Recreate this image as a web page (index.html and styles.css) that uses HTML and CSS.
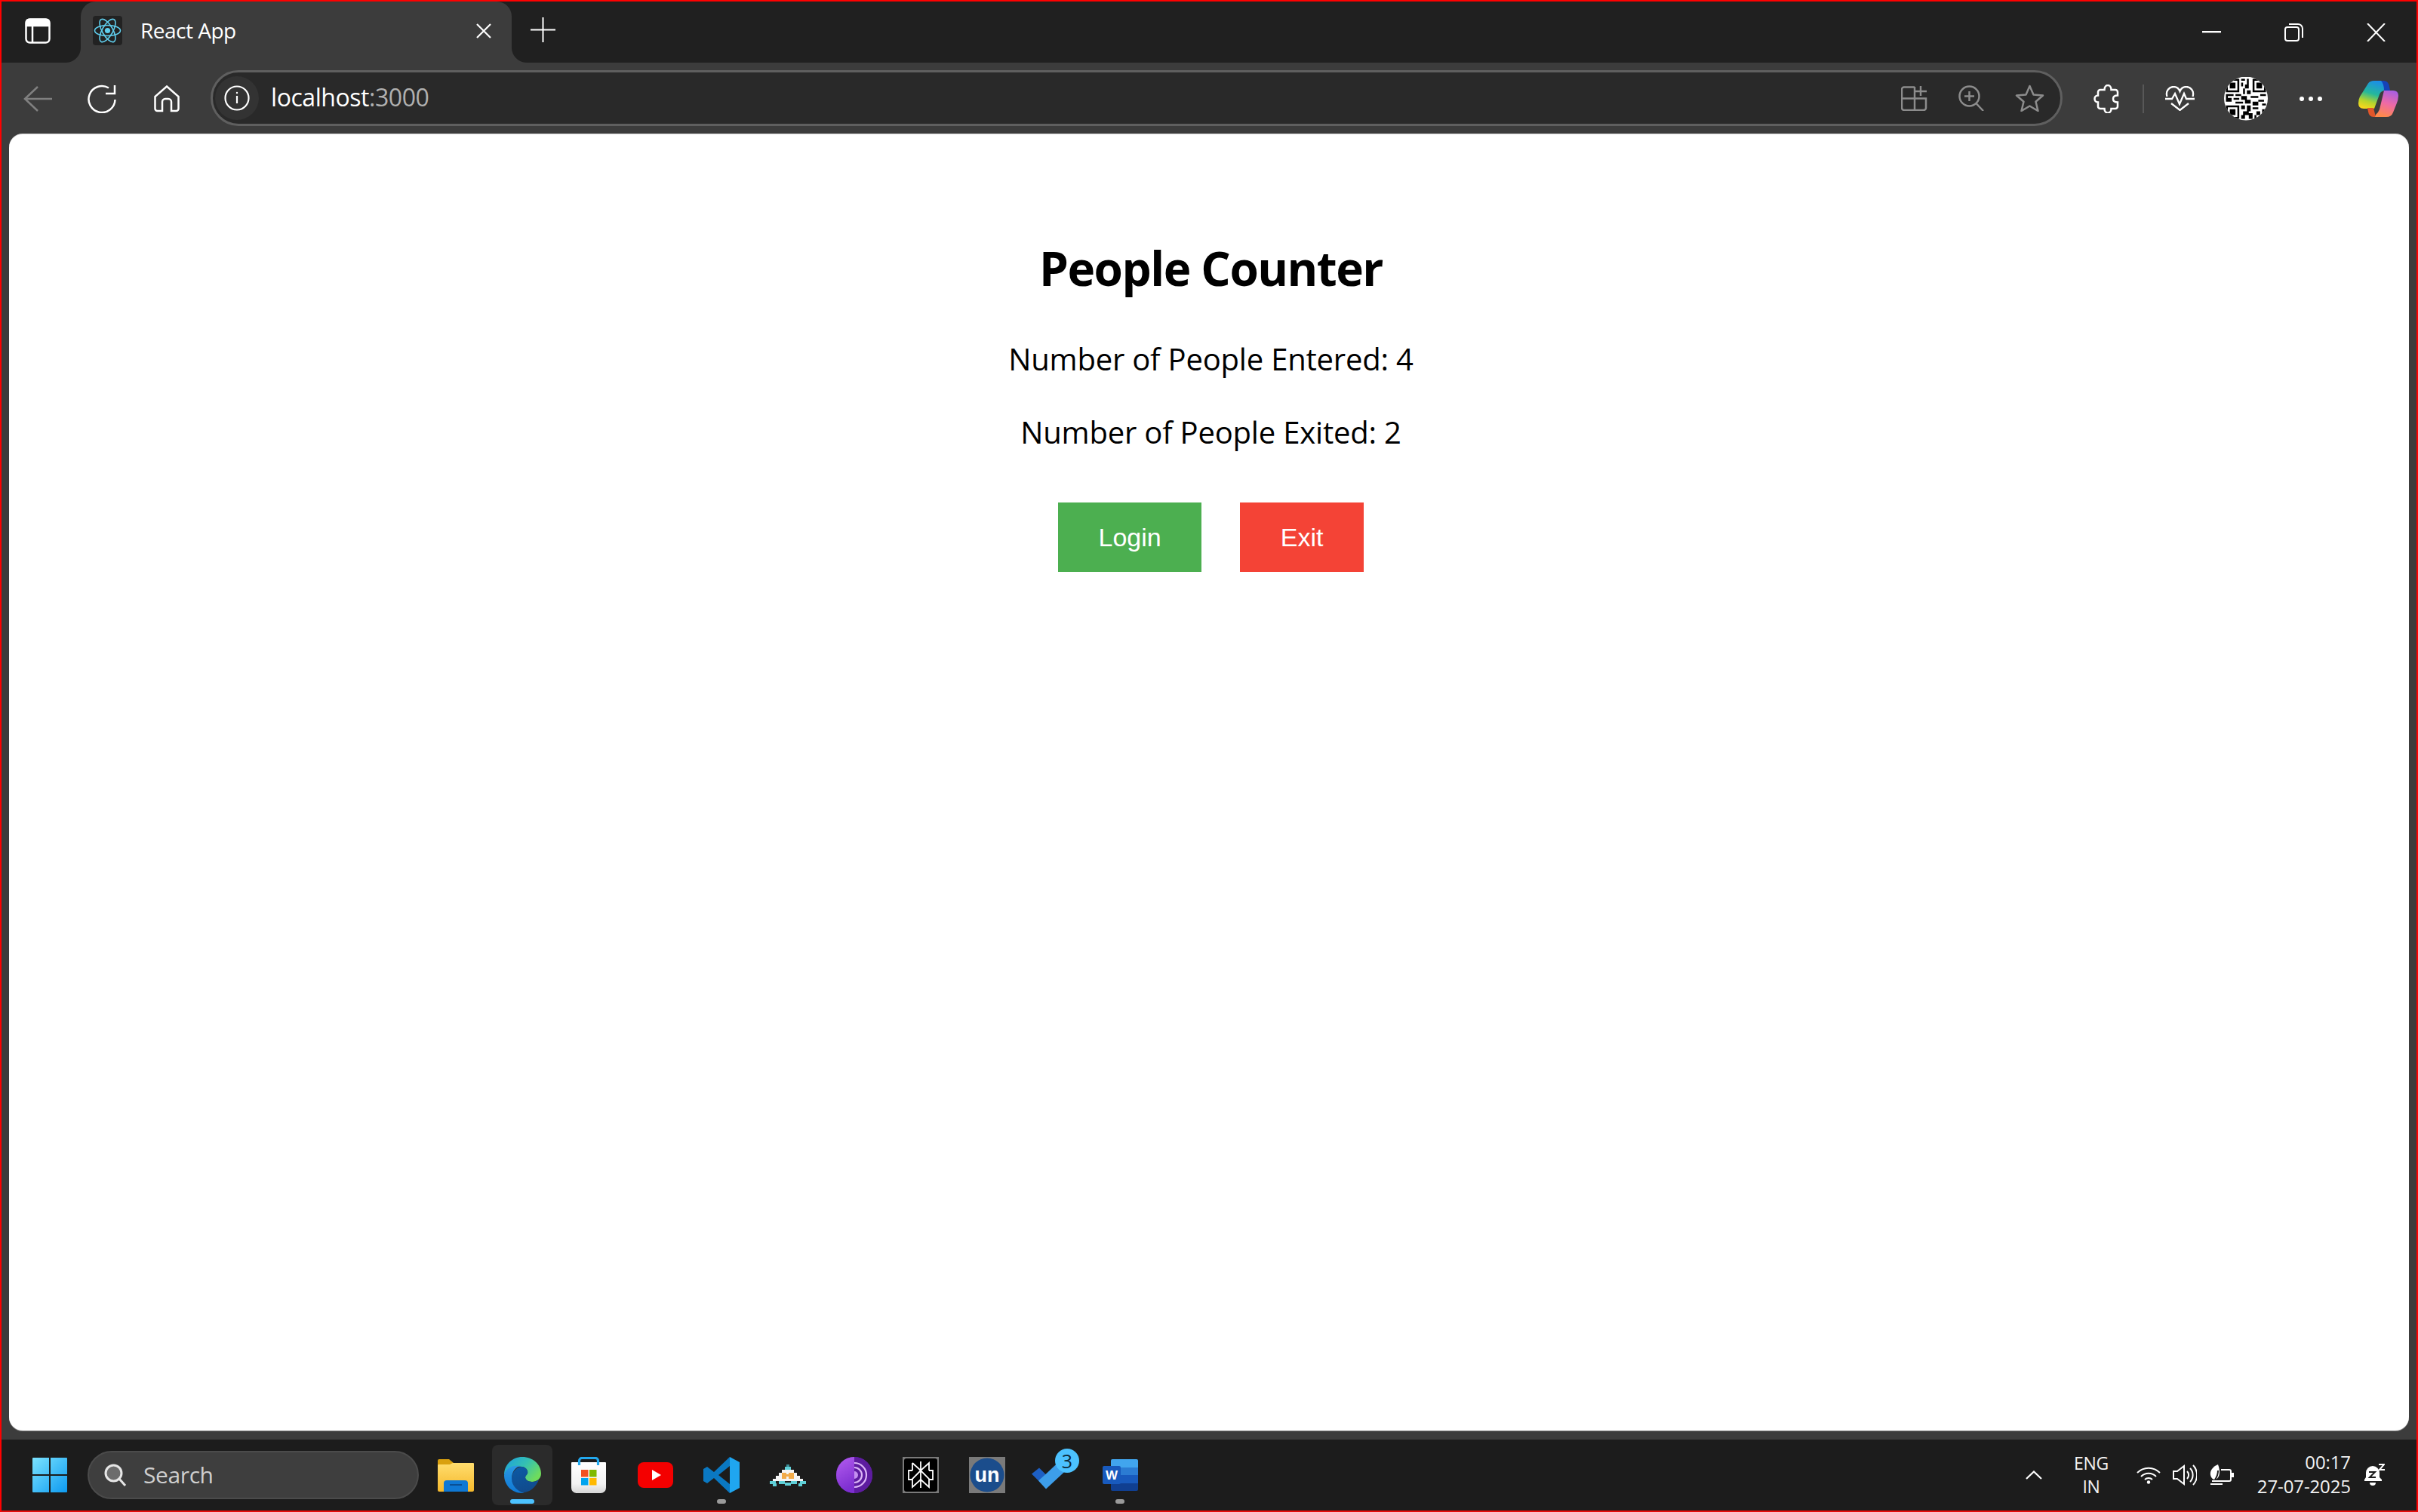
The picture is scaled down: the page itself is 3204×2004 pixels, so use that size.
FILE: index.html
```html
<!DOCTYPE html>
<html lang="en">
<head>
<meta charset="utf-8">
<title>React App</title>
<link rel="stylesheet" href="styles.css">
</head>
<body>
<div class="frame">
  <header class="tabbar">
    <div class="side-btn">
      <svg width="34" height="34" viewBox="0 0 34 34" fill="none" stroke="#fff" stroke-width="2.5"><rect x="1.5" y="1.5" width="31" height="31" rx="5"/><path d="M2 5a3 3 0 0 1 3-3h24a3 3 0 0 1 3 3v5H2z" fill="#fff"/><path d="M10 9v24"/></svg>
    </div>
    <div class="tab">
      <svg class="favicon" width="39" height="39" viewBox="0 0 39 39"><rect width="39" height="39" rx="4" fill="#222"/><g fill="none" stroke="#5fcdec" stroke-width="1.6"><ellipse cx="19.5" cy="19.5" rx="17" ry="7"/><ellipse cx="19.5" cy="19.5" rx="17" ry="7" transform="rotate(60 19.5 19.5)"/><ellipse cx="19.5" cy="19.5" rx="17" ry="7" transform="rotate(120 19.5 19.5)"/></g><circle cx="19.5" cy="19.5" r="3.6" fill="#5fcdec"/></svg>
      <span class="tab-title">React App</span>
      <svg class="tab-close" width="20" height="20" viewBox="0 0 20 20" stroke="#fff" stroke-width="2.2"><path d="M1 1l18 18M19 1L1 19"/></svg>
    </div>
    <svg class="new-tab" width="33" height="33" viewBox="0 0 33 33" stroke="#fff" stroke-width="2"><path d="M16.500 0v33M0 16.500h33"/></svg>
    <div class="win-controls">
      <svg width="25" height="3" viewBox="0 0 25 3"><rect width="25" height="2.400" fill="#fff"/></svg>
      <svg width="25" height="24" viewBox="0 0 25 24" fill="none" stroke="#fff" stroke-width="2"><rect x="1" y="5" width="18" height="18" rx="3"/><path d="M6 1h12a6 6 0 0 1 6 6v12"/></svg>
      <svg width="25" height="24" viewBox="0 0 25 24" stroke="#fff" stroke-width="2"><path d="M1 0l23 24M24 0L1 24"/></svg>
    </div>
  </header>

  <nav class="toolbar">
    <svg class="t-back" width="38" height="34" viewBox="0 0 38 34" fill="none" stroke="#808080" stroke-width="2.500"><path d="M38 17H2M19 1L2 17l17 16"/></svg>
    <svg class="t-reload" width="38" height="38" viewBox="0 0 38 38" fill="none" stroke="#fff" stroke-width="2.500"><path d="M36.500 20A17.500 17.500 0 1 1 28 4.500"/><path d="M36 1v11H24"/></svg>
    <svg class="t-home" width="34" height="36" viewBox="0 0 34 36" fill="none" stroke="#fff" stroke-width="2.500"><path d="M17 1.500L32.500 15v16a3 3 0 0 1-3 3H23V22a4 4 0 0 0-4-4h-4a4 4 0 0 0-4 4v12H4.500a3 3 0 0 1-3-3V15z"/></svg>
    <div class="address">
      <div class="info-pill">
        <svg width="34" height="34" viewBox="0 0 34 34" fill="none" stroke="#fff" stroke-width="2.200"><circle cx="17" cy="17" r="15.500"/><path d="M17 14v10"/><circle cx="17" cy="10" r="1.200" fill="#fff" stroke="none"/></svg>
      </div>
      <span class="url">localhost<span class="url-port">:3000</span></span>
      <div class="addr-icons">
        <svg width="35" height="34" viewBox="0 0 35 34" fill="none" stroke="#8c8c8c" stroke-width="2.500"><path d="M18 2.500H4a3 3 0 0 0-3 3V30a3 3 0 0 0 3 3h26a3 3 0 0 0 3-3V17.500H1M18 2v31M26 1v13M19 8h15"/></svg>
        <svg width="34" height="34" viewBox="0 0 34 34" fill="none" stroke="#8c8c8c" stroke-width="2.500"><circle cx="14.500" cy="14.500" r="13"/><path d="M23.500 24L33 34M14.500 8v13M8 14.500h13"/></svg>
        <svg width="39" height="36" viewBox="0 0 39 36" fill="none" stroke="#8c8c8c" stroke-width="2.500"><path d="M19.500 2l5 11.500 12.500 1-9.500 8.200 3 12.300-11-6.500-11 6.500 3-12.300L2 14.500l12.500-1z" stroke-linejoin="round"/></svg>
      </div>
    </div>
    <svg class="t-puzzle" width="35" height="38" viewBox="0 0 35 38" fill="none" stroke="#fff" stroke-width="2.500"><path d="M9 7h5.500c0-8 9-8 9 0H29a3 3 0 0 1 3 3v4.500c-4.500 0-6 2-6 4.500s1.500 4.500 6 4.500V29a3 3 0 0 1-3 3h-5.500c0 7.500-9 7.500-9 0H9a3 3 0 0 1-3-3v-5.500c-6 0-6-9 0-9V10a3 3 0 0 1 3-3z"/></svg>
    <span class="t-divider"></span>
    <svg class="t-heart" width="39" height="33" viewBox="0 0 39 33" fill="none" stroke="#fff" stroke-width="2.300"><path d="M2.500 14C0 6 6 1 11 1c4 0 7 2 8.500 6C21 3 24 1 28 1c5 0 11 5 8.500 13"/><path d="M0 17h9l4-7 6 14 6-14 3 7h11M8 23l11.500 9L31 23"/></svg>
    <svg class="t-qr" width="58" height="58" viewBox="-1 -1 23 23"><rect x="-1" y="-1" width="23" height="23" fill="#fff"/><path fill="#000" fill-rule="evenodd" d="M0 0h7v7H0zM1 1v5h5V1zM2 2h3v3H2zM14 0h7v7h-7zM15 1v5h5V1zM16 2h3v3h-3zM0 14h7v7H0zM1 15v5h5v-5zM2 16h3v3H2zM8 0h2v1H8zM11 0h1v3h-1zM8 2h1v2H8zM10 3h2v2h-2zM9 5h1v3H9zM11 6h2v2h-2zM0 8h4v1H0zM5 8h3v1H5zM1 10h2v2H1zM0 9h1v3H0zM4 10h3v1H4zM5 12h4v1H5zM8 9h3v2H8zM10 11h3v2h-3zM13 9h4v1h-4zM18 8h3v1h-3zM17 11h3v1h-3zM14 12h3v2h-3zM19 13h2v1h-2zM8 14h2v2H8zM11 14h2v3h-2zM9 17h3v2H9zM12 18h2v3h-2zM8 19h2v2H8zM14 15h3v1h-3zM16 17h2v2h-2zM19 16h2v2h-2zM15 19h1v2h-1zM18 19h2v1h-2z"/></svg>
    <svg class="t-dots" width="30" height="6" viewBox="0 0 30 6" fill="#fff"><circle cx="3" cy="3" r="3"/><circle cx="15" cy="3" r="3"/><circle cx="27" cy="3" r="3"/></svg>
    <svg class="t-copilot" width="53" height="48" viewBox="0 0 53 48">
      <defs>
        <linearGradient id="cpA" x1="0.600" y1="0" x2="0.300" y2="1"><stop offset="0" stop-color="#1b8fe6"/><stop offset=".45" stop-color="#25b89b"/><stop offset=".75" stop-color="#b6d42c"/><stop offset="1" stop-color="#f7d61c"/></linearGradient>
        <linearGradient id="cpB" x1="0.700" y1="0" x2="0.400" y2="1"><stop offset="0" stop-color="#a95fe0"/><stop offset=".5" stop-color="#ee6aa6"/><stop offset="1" stop-color="#ff8a4a"/></linearGradient>
      </defs>
      <path d="M13 3.500Q15 0 21 0h13l2 13q-6 0-8 5L21 37H7q-7 0-7-7 0-5 2-9z" fill="url(#cpA)"/>
      <path d="M30 0h3q7 0 8 8l1 5h-8Q34 4 30 0z" fill="#1543b8"/>
      <path d="M12 36h8l3 12h-3Q14 48 13 41z" fill="#e0562a"/>
      <path d="M34 13h12q7 0 7 7 0 6-3 12l-4 10q-2 6-9 6H22l1-3q3-2 5-7z" fill="url(#cpB)"/>
    </svg>
  </nav>

  <main class="viewport">
    <div class="app">
      <h1 class="app-title">People Counter</h1>
      <p class="app-stat">Number of People Entered: 4</p>
      <p class="app-stat">Number of People Exited: 2</p>
      <div class="app-actions">
        <button class="btn btn-login" type="button">Login</button>
        <button class="btn btn-exit" type="button">Exit</button>
      </div>
    </div>
  </main>

  <footer class="taskbar">
    <svg class="win-logo" width="46" height="46" viewBox="0 0 46 46">
      <defs><linearGradient id="winG" x1="0" y1="0" x2="1" y2="1"><stop offset="0" stop-color="#7be3ff"/><stop offset="1" stop-color="#0d9af0"/></linearGradient></defs>
      <path d="M1 0h21v22H0V1a1 1 0 0 1 1-1zM24 0h21a1 1 0 0 1 1 1v21H24zM0 24h22v22H1a1 1 0 0 1-1-1zM24 24h22v21a1 1 0 0 1-1 1H24z" fill="url(#winG)"/>
    </svg>
    <div class="search">
      <svg width="30" height="30" viewBox="0 0 30 30" fill="none"><circle cx="12.500" cy="12.500" r="10.500" fill="#6c6c6c" stroke="#e6e6e6" stroke-width="3"/><path d="M20 20l8 9" stroke="#e6e6e6" stroke-width="3"/></svg>
      <span class="search-label">Search</span>
    </div>
    <div class="apps">
      <div class="slot">
        <svg width="48" height="43" viewBox="0 0 48 43">
          <defs><linearGradient id="fdG" x1="0" y1="0" x2="0" y2="1"><stop offset="0" stop-color="#ffdd6e"/><stop offset="1" stop-color="#f6b92c"/></linearGradient></defs>
          <path d="M2 0h13l6 5v6H0V2a2 2 0 0 1 2-2z" fill="#d9a00f"/>
          <path d="M0 8q0-1 1-1h15l4-2h27a1 1 0 0 1 1 1v35a2 2 0 0 1-2 2H2a2 2 0 0 1-2-2z" fill="url(#fdG)"/>
          <path d="M8 43V32a4 4 0 0 1 4-4h24a4 4 0 0 1 4 4v11z" fill="#0f78d4"/>
          <rect x="16" y="33" width="16" height="2" fill="#0a4f94"/>
        </svg>
      </div>
      <div class="slot slot-active">
        <svg width="49" height="48" viewBox="0 0 49 48">
          <defs>
            <linearGradient id="edA" x1="0" y1="0" x2="1" y2="0.600"><stop offset="0" stop-color="#1b9de2"/><stop offset=".55" stop-color="#35c1b1"/><stop offset="1" stop-color="#6fdc5c"/></linearGradient>
            <linearGradient id="edB" x1="0.300" y1="0" x2="0.500" y2="1"><stop offset="0" stop-color="#0c59a4"/><stop offset="1" stop-color="#114a8b"/></linearGradient>
            <linearGradient id="edC" x1="0.500" y1="0" x2="0.500" y2="1"><stop offset="0" stop-color="#2a98e4"/><stop offset="1" stop-color="#0f78d4"/></linearGradient>
          </defs>
          <path d="M24 0c14 0 25 10 25 22 0 7-6 11-12 11-5 0-9-3-9-6 0-2 2-3 3-5 1-3-1-8-7-9C14 11 4 15 0 24 0 10 11 0 24 0z" fill="url(#edA)"/>
          <path d="M24 13c6 1 8 6 7 9-1 2-3 3-3 5 0 3 4 6 9 6 4 0 7-1 9-3-4 11-14 18-22 17-8-1-15-9-14-19 1-9 7-15 14-15z" fill="url(#edB)"/>
          <path d="M0 24c2-9 12-14 22-12-7 1-12 8-12 17 0 9 8 17 17 19h-3C10 48 0 37 0 24z" fill="url(#edC)"/>
        </svg>
        <span class="indicator indicator-on"></span>
      </div>
      <div class="slot">
        <svg width="46" height="48" viewBox="0 0 46 48">
          <defs><linearGradient id="stG" x1="0" y1="0" x2="0" y2="1"><stop offset="0" stop-color="#fff"/><stop offset=".7" stop-color="#f2f2f2"/><stop offset="1" stop-color="#d5d5d5"/></linearGradient></defs>
          <path d="M1 7h44a1 1 0 0 1 1 1v33a7 7 0 0 1-7 7H7a7 7 0 0 1-7-7V8a1 1 0 0 1 1-1z" fill="url(#stG)"/>
          <path d="M10.500 11V5a3.500 3.500 0 0 1 3.500-3.500h18A3.500 3.500 0 0 1 35.500 5v6" fill="none" stroke="#22a8ee" stroke-width="3.200"/>
          <rect x="13" y="17" width="9.500" height="9.500" fill="#f25022"/><rect x="24" y="17" width="9.500" height="9.500" fill="#7fba00"/><rect x="13" y="28" width="9.500" height="9.500" fill="#00a4ef"/><rect x="24" y="28" width="9.500" height="9.500" fill="#ffb900"/>
        </svg>
      </div>
      <div class="slot">
        <svg width="47" height="34" viewBox="0 0 47 34"><rect width="47" height="34" rx="8" fill="#f40000"/><path d="M19 10l12 7-12 7z" fill="#fff"/></svg>
      </div>
      <div class="slot">
        <svg width="48" height="48" viewBox="0 0 48 48"><path d="M35 0L14 20 5 13l-5 3v16l5 3 9-7 21 20 0-12-15-12 15-12z" fill="#0a78c2"/><path d="M35 0l13 7v34l-13 7z" fill="#1fa6f0"/></svg>
        <span class="indicator"></span>
      </div>
      <div class="slot">
        <svg width="48" height="29" viewBox="0 0 48 29" shape-rendering="crispEdges">
          <path d="M22 0h4v3h-4z" fill="#3c8d96"/><path d="M20 3h8v4h-8z" fill="#5fd0d8"/>
          <path d="M16 7h16v4H16zM12 11h24v4H12zM8 15h32v4H8zM4 19h40v3H4z" fill="#f4f4f4"/>
          <path d="M16 11h6v8h-6zM25 11h7v8h-7zM22 13h3v3h-3z" fill="#f2ab4a"/>
          <path d="M0 22h8v4H0zM12 22h8v4h-8zM20 24h8v4h-8zM28 22h8v4h-8zM40 22h8v4h-8zM4 25h5v4H4zM38 25h5v4h-5z" fill="#5fd0d8"/>
        </svg>
      </div>
      <div class="slot">
        <svg width="48" height="48" viewBox="0 0 48 48">
          <defs><linearGradient id="torG" x1="0" y1="0" x2="0.300" y2="1"><stop offset="0" stop-color="#b45df0"/><stop offset="1" stop-color="#7d2fd0"/></linearGradient></defs>
          <circle cx="24" cy="24" r="24" fill="#6d20b8"/>
          <path d="M24 0a24 24 0 0 0 0 48z" fill="url(#torG)"/>
          <path d="M24 0a24 24 0 0 1 0 48z" fill="#5d1c9f"/>
          <path d="M24 8a16 16 0 0 1 0 32M24 14a10 10 0 0 1 0 20" fill="none" stroke="#dcb6f7" stroke-width="2.200"/>
          <path d="M24 19a5 5 0 0 1 0 10z" fill="#c48ff0"/>
        </svg>
      </div>
      <div class="slot">
        <svg width="48" height="48" viewBox="0 0 48 48"><rect width="48" height="48" fill="#7a7a7a"/><rect x="2" y="2" width="44" height="44" rx="3" fill="#000"/><path d="M24 6v35M13 8l11 10L35 8v10M13 8v10M13 18H8v12h5M35 18h5v12h-5M24 18L13 29v11l11-10 11 10V29z" fill="none" stroke="#fff" stroke-width="1.800"/></svg>
      </div>
      <div class="slot">
        <svg width="48" height="48" viewBox="0 0 48 48"><rect width="48" height="48" fill="#7a7a7a"/><circle cx="24" cy="24" r="22.500" fill="#1b4d8c"/><text class="un-text" x="24" y="33" text-anchor="middle">un</text></svg>
      </div>
      <div class="slot">
        <svg class="todo" width="60" height="55" viewBox="0 0 60 55">
          <path d="M1 33l10-8 13 13-9 9z" fill="#1d5fc4"/>
          <path d="M10 42l10 11 28-26-11-10-17 16z" fill="#3d9eea"/>
        </svg>
        <span class="todo-badge">3</span>
      </div>
      <div class="slot">
        <svg width="47" height="42" viewBox="0 0 47 42">
          <path d="M13 0h32a2 2 0 0 1 2 2v9H11V2a2 2 0 0 1 2-2z" fill="#41a5ee"/><rect x="11" y="11" width="36" height="10" fill="#2b7cd3"/><rect x="11" y="21" width="36" height="11" fill="#185abd"/><path d="M11 32h36v8a2 2 0 0 1-2 2H13a2 2 0 0 1-2-2z" fill="#103f91"/>
          <rect y="9" width="24" height="24" rx="2" fill="#185abd"/>
          <text class="word-text" x="12" y="27" text-anchor="middle">W</text>
        </svg>
        <span class="indicator"></span>
      </div>
    </div>
    <div class="tray">
      <svg class="tray-chevron" width="22" height="12" viewBox="0 0 22 12" fill="none" stroke="#fff" stroke-width="2.200"><path d="M1 11L11 1.500 21 11"/></svg>
      <div class="tray-lang"><span>ENG</span><span>IN</span></div>
      <svg class="tray-wifi" width="32" height="24" viewBox="0 0 32 24" fill="none" stroke="#fff" stroke-width="2"><path d="M1 9a21 21 0 0 1 30 0M6 14a14 14 0 0 1 20 0M11 18a7 7 0 0 1 10 0"/><circle cx="16" cy="21.500" r="2.200" fill="#fff" stroke="none"/></svg>
      <svg class="tray-volume" width="32" height="30" viewBox="0 0 32 30" fill="none" stroke="#fff" stroke-width="2"><path d="M1 10h5l9-7v24l-9-7H1z"/><path d="M19 10a7 7 0 0 1 0 10M23 6a13 13 0 0 1 0 18M27 2a19 19 0 0 1 0 26"/></svg>
      <svg class="tray-battery" width="33" height="28" viewBox="0 0 33 28" fill="none" stroke="#fff" stroke-width="2"><path d="M12 0C5 3 1 8 2 14c1 4 3 6 6 6 4-1 6-5 6-10 0-4-1-7-2-10z" fill="#fff" stroke="none"/><path d="M16 7h11a2 2 0 0 1 2 2v11a2 2 0 0 1-2 2H4"/><path d="M2 26h16"/><rect x="30" y="11" width="3" height="6" fill="#fff" stroke="none"/><path d="M8 20c3-4 4-8 4-12" stroke="#1c1c1c"/></svg>
      <div class="tray-clock"><span>00:17</span><span>27-07-2025</span></div>
      <svg class="tray-bell" width="27" height="30" viewBox="0 0 27 30"><path d="M11 3a9 9 0 0 1 9 9v6l3 3v2H0v-2l2-3v-6a9 9 0 0 1 9-9z" fill="#fff"/><path d="M7 25h8a4 4 0 0 1-8 0z" fill="#fff"/><path d="M6 11h8l-7 7h8" fill="none" stroke="#1c1c1c" stroke-width="2"/><path d="M19 1h7l-6 7h7" fill="none" stroke="#fff" stroke-width="2"/></svg>
    </div>
  </footer>
</div>
</body>
</html>
```

FILE: styles.css
```css
* { box-sizing: border-box; }
html, body { margin: 0; padding: 0; height: 100%; }
body { background: #3c3c3c; font-family: "Open Sans", "Noto Sans", sans-serif; overflow: hidden; }
svg { display: block; flex: none; }

.frame {
  width: 100vw;
  height: 100vh;
  border: 2px solid #f00;
  border-bottom-color: #e50d0d;
  display: flex;
  flex-direction: column;
  background: #3c3c3c;
}

/* title strip */
.tabbar {
  flex: none;
  height: 81px;
  background: #202020;
  display: flex;
  align-items: center;
  color: #fff;
}
.side-btn { width: 105px; padding-left: 31px; padding-bottom: 4px; }
.tab {
  position: relative;
  align-self: stretch;
  width: 571px;
  padding: 0 27px 4px 16px;
  background: #3c3c3c;
  border-radius: 20px 20px 0 0;
  display: flex;
  align-items: center;
}
.tab::before, .tab::after {
  content: "";
  position: absolute;
  bottom: 0;
  width: 20px;
  height: 20px;
}
.tab::before { left: -20px; background: radial-gradient(circle at 0 0, #202020 19.500px, #3c3c3c 20.500px); }
.tab::after { right: -20px; background: radial-gradient(circle at 100% 0, #202020 19.500px, #3c3c3c 20.500px); }
.tab-title { margin-left: 24px; margin-bottom: 2px; font-size: 28px; letter-spacing: -0.500px; line-height: 36px; }
.tab-close { margin-left: auto; }
.new-tab { margin-left: 25px; margin-bottom: 6px; }
.win-controls {
  margin-left: auto;
  padding-right: 41px;
  display: flex;
  align-items: center;
  gap: 84px;
}

/* toolbar */
.toolbar {
  flex: none;
  height: 95px;
  display: flex;
  align-items: center;
}
.t-back { margin-left: 29px; }
.t-reload { margin-left: 47px; }
.t-home { margin-left: 50px; }
.address {
  margin-left: 41px;
  margin-bottom: 1px;
  width: 2454px;
  height: 74px;
  border: 3px solid #5f5f5f;
  border-radius: 37px;
  background: #292929;
  display: flex;
  align-items: center;
  padding: 0 21px 0 3px;
}
.info-pill {
  width: 58px;
  height: 58px;
  border-radius: 50%;
  background: #333;
  display: flex;
  align-items: center;
  justify-content: center;
}
.url { margin-left: 16px; margin-bottom: 2px; font-size: 32px; letter-spacing: -0.450px; color: #fff; line-height: 40px; }
.url-port { color: #b0b0b0; }
.addr-icons { margin-left: auto; display: flex; align-items: center; gap: 41px; }
.t-puzzle { margin-left: 41px; }
.t-divider { margin-left: 30px; width: 2px; height: 38px; background: #585858; }
.t-heart { margin-left: 28px; }
.t-qr { margin-left: 39px; clip-path: circle(50%); }
.t-dots { margin-left: 42px; }
.t-copilot { margin-left: 48px; }

/* page */
.viewport {
  flex: 1;
  min-height: 0;
  margin: 0 10px 12px;
  background: #fff;
  border-radius: 18px;
  box-shadow: 0 1px 0 #8a8a8a, 0 -1px 0 #d0d0d0;
  padding: 137px 0 0 5px;
  color: #000;
}
.app { text-align: center; }
.app-title { margin: 0; font-size: 62px; font-weight: 700; line-height: 80px; letter-spacing: -1.500px; }
.app-stat { margin: 47px 0 0; font-size: 40px; line-height: 50px; letter-spacing: -0.200px; }
.app-title + .app-stat { margin-top: 56px; }
.app-actions { margin-top: 68px; display: flex; justify-content: center; gap: 51px; }
.btn {
  height: 92px;
  padding: 0 53.500px;
  border: 0;
  font-family: "Liberation Sans", Arial, sans-serif;
  font-size: 34px;
  color: #fff;
}
.btn-login { background: #4caf50; }
.btn-exit { background: #f44336; }

/* taskbar */
.taskbar {
  flex: none;
  height: 94px;
  background: #1c1c1c;
  display: flex;
  align-items: center;
  color: #fff;
}
.win-logo { margin-left: 41px; }
.search {
  margin-left: 27px;
  width: 439px;
  height: 64px;
  border: 2px solid #4b4b4b;
  border-radius: 32px;
  background: #3e3e3e;
  display: flex;
  align-items: center;
  padding-left: 20px;
}
.search-label { margin-left: 22px; font-size: 30px; letter-spacing: -0.400px; color: #cfcfcf; line-height: 40px; }
.apps { margin-left: 5px; display: flex; align-items: center; }
.slot {
  position: relative;
  width: 88px;
  height: 80px;
  display: flex;
  align-items: center;
  justify-content: center;
}
.slot-active::before {
  content: "";
  position: absolute;
  left: 4px;
  right: 4px;
  top: 0;
  bottom: 0;
  background: #2b2b2b;
  border-radius: 8px;
}
.slot-active svg { position: relative; }
.indicator {
  position: absolute;
  left: 38px;
  bottom: 2px;
  width: 12px;
  height: 6px;
  border-radius: 3px;
  background: #9a9a9a;
}
.indicator-on { left: 28px; width: 32px; background: #4cc2ff; }
.todo { margin-right: 10px; margin-bottom: 0; margin-left: 0; transform: translate(5px, -7.500px); }
.todo-badge {
  position: absolute;
  left: 46px;
  top: 5px;
  width: 32px;
  height: 32px;
  border-radius: 50%;
  background: #4cc2ff;
  color: #0d2a3a;
  font-size: 25px;
  line-height: 32px;
  text-align: center;
}
.un-text { font: 700 27px "Liberation Sans", Arial, sans-serif; fill: #fff; }
.word-text { font: 700 17px "Liberation Sans", Arial, sans-serif; fill: #fff; }

.tray { margin-left: auto; padding-right: 42px; display: flex; align-items: center; }
.tray-lang {
  margin-left: 25px;
  width: 80px;
  display: flex;
  flex-direction: column;
  align-items: center;
  font-size: 23px;
  line-height: 31px;
  color: #f2f2f2;
  letter-spacing: -0.300px;
}
.tray-wifi { margin-left: 20px; }
.tray-volume { margin-left: 16px; }
.tray-battery { margin-left: 16px; }
.tray-clock {
  width: 155px;
  margin-bottom: 3px;
  display: flex;
  flex-direction: column;
  align-items: flex-end;
  font-size: 24px;
  line-height: 32px;
  color: #f2f2f2;
  letter-spacing: -0.100px;
}
.tray-bell { margin-left: 18px; }
```
